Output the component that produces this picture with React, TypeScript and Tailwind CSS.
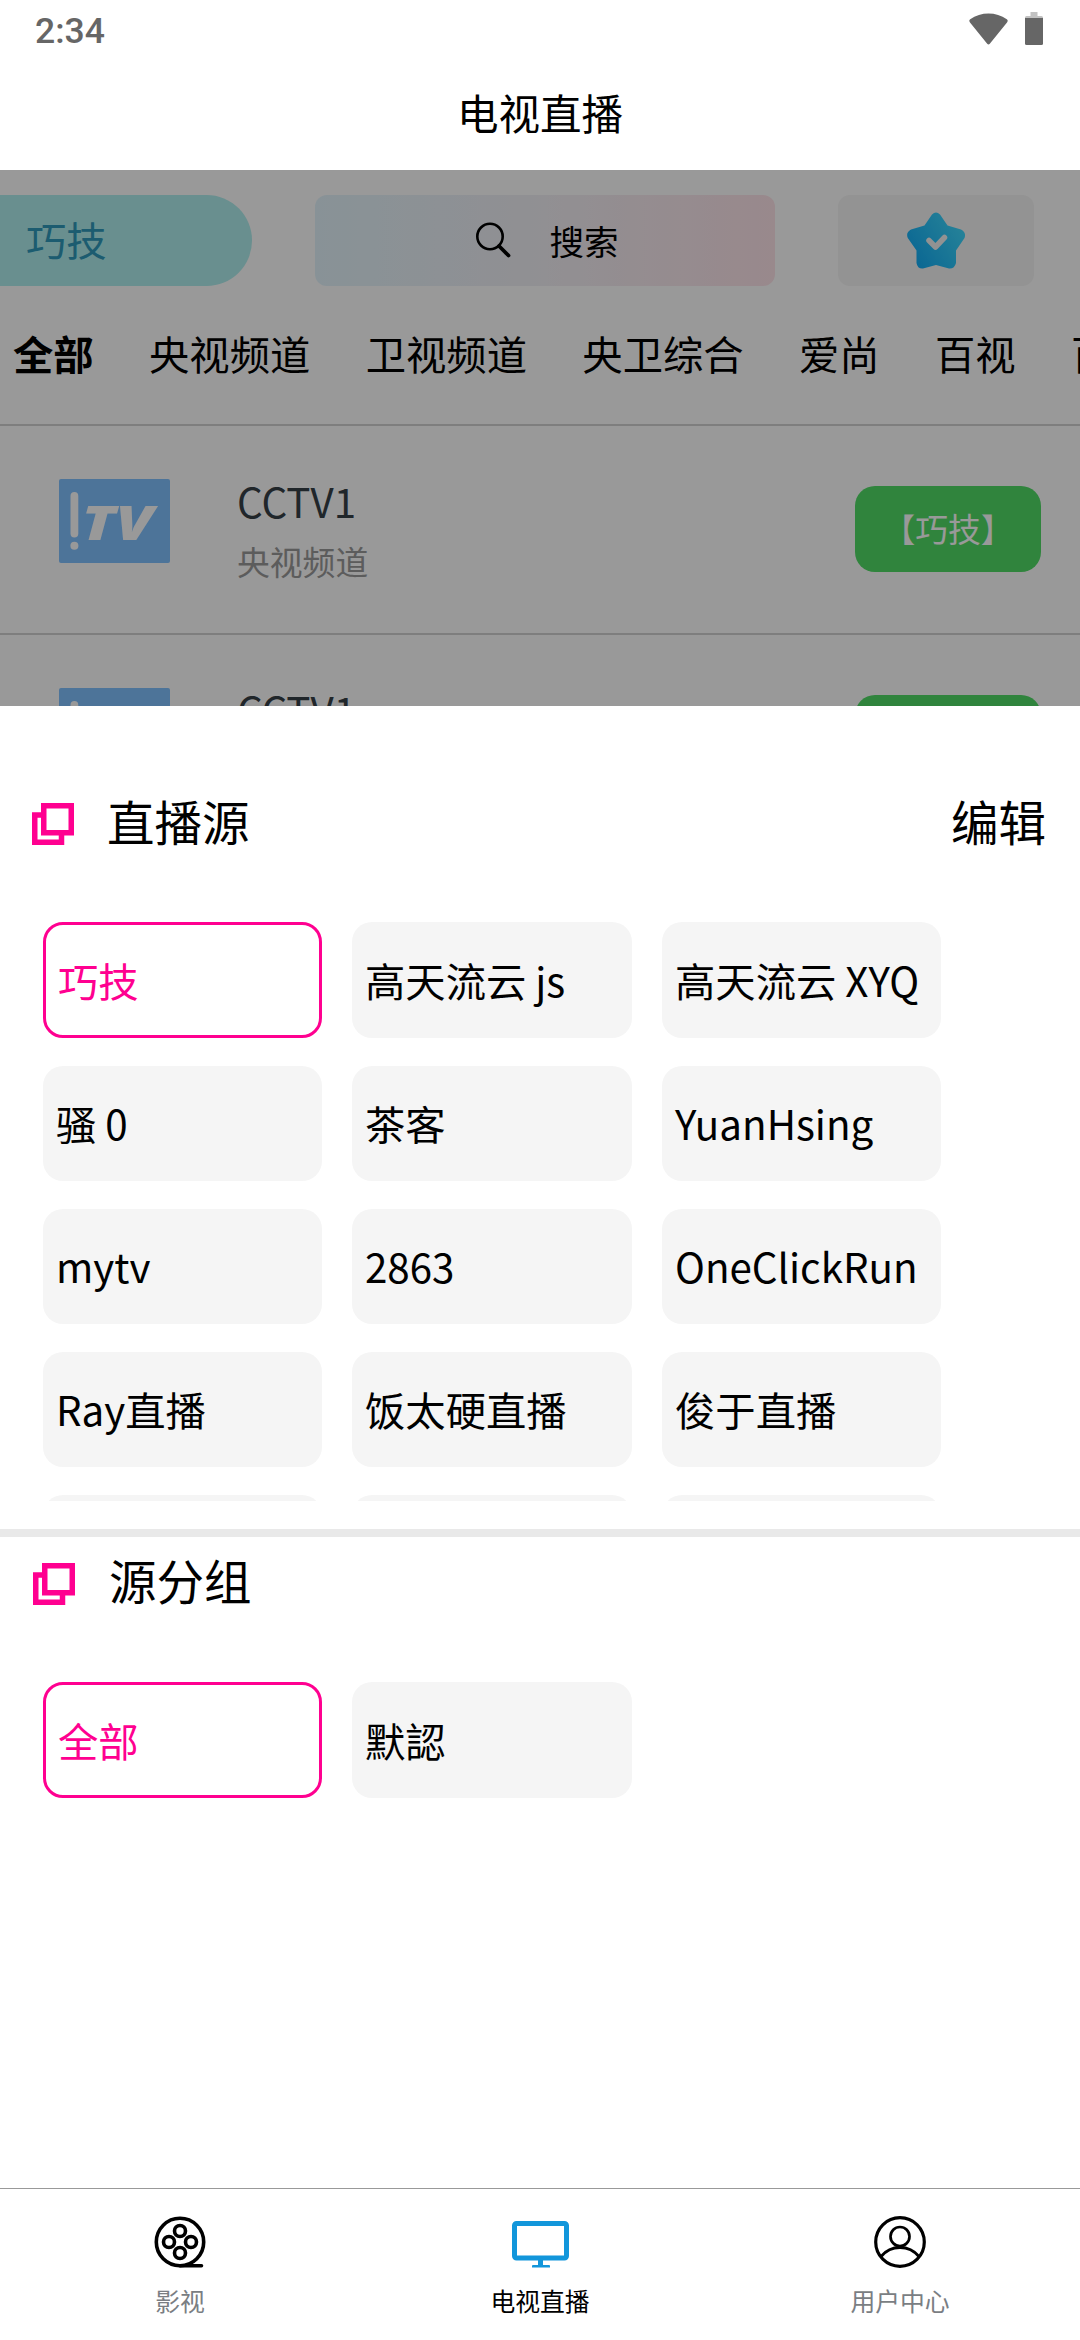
import type { ReactNode } from "react";

const tabs = ["全部", "央视频道", "卫视频道", "央卫综合", "爱尚", "百视", "百视"];

const sources = [
  "巧技", "高天流云 js", "高天流云 XYQ",
  "骚 0", "茶客", "YuanHsing",
  "mytv", "2863", "OneClickRun",
  "Ray直播", "饭太硬直播", "俊于直播",
  "", "", "",
];

const groups = ["全部", "默認"];

function StatusBar() {
  return (
    <div className="flex h-[60px] items-center justify-between pl-[35px] pr-[37px] text-[#666666]">
      <span className="pt-px font-['Roboto',sans-serif] text-[35.500px] font-medium leading-[60px]">2:34</span>
      <div className="flex items-center gap-[17px] pb-[3px]">
        <svg className="h-[32px] w-[39px]" viewBox="0 0 39 32" fill="currentColor">
          <path d="M1 9.5Q-.5 7.5 1.2 6.3C6.500 2.500 13 .5 19.500 .5S32.500 2.500 37.800 6.300Q39.500 7.500 38 9.500L20.800 30.800Q19.500 32 18.200 30.800Z" />
        </svg>
        <svg className="h-[33px] w-[18px]" viewBox="0 0 18 33">
          <path d="M5.500 0H12.500V4H16.500Q18 4 18 5.500V7H0V5.500Q0 4 1.500 4H5.500Z" fill="#c2c2c2" />
          <path d="M0 6H18V31.500Q18 33 16.500 33H1.500Q0 33 0 31.500Z" fill="currentColor" />
        </svg>
      </div>
    </div>
  );
}

function StarIcon() {
  return (
    <svg className="h-[57px] w-[58px]" viewBox="0 0 58 57">
      <defs>
        <linearGradient id="star" x1="0" y1="0.8" x2="1" y2="0.2">
          <stop offset="0" stopColor="#10aaf5" />
          <stop offset="1" stopColor="#42dcff" />
        </linearGradient>
      </defs>
      <path
        d="M25 2.500Q29 -1.500 33 2.500L40.500 13.500L54 17.500Q59.500 20.500 57.500 26L49 38.500V51Q47.500 57 42 56.500L29 53L16 56.500Q10.500 57 9.500 51V38.500L.8 26Q-1.500 20.500 4 17.500L17.500 13.500Z"
        fill="url(#star)"
      />
      <path d="M22 28.500L28.500 35L37.500 25.500" fill="none" stroke="#f4f4f4" strokeWidth="5.500" strokeLinecap="round" strokeLinejoin="round" />
    </svg>
  );
}

function TvLogo() {
  return (
    <div className="flex h-[84px] w-[111px] items-center rounded-[2px] bg-[#80c1ff]">
      <svg className="h-[84px] w-[111px]" viewBox="0 0 111 84" fill="#ffffff">
        <rect x="11.500" y="13" width="7.800" height="45.500" rx="3.900" />
        <circle cx="15.400" cy="66.800" r="4" />
        <text x="22.500" y="61" fontFamily="Open Sans" fontSize="48.500" fontWeight="800" fontStyle="italic" textLength="72" lengthAdjust="spacingAndGlyphs">TV</text>
      </svg>
    </div>
  );
}

function ChannelRow() {
  return (
    <div className="flex h-[209px] shrink-0 items-start border-b-2 border-[#d2d2d2] pl-[59px] pr-[39px]">
      <div className="pt-[53px]">
        <TvLogo />
      </div>
      <div className="flex flex-1 flex-col pl-[67px] pt-[45px]">
        <span className="text-[40.320px] leading-[60px] text-[#364046]">CCTV1</span>
        <span className="text-[32.800px] leading-[60px] text-[#9a9a9a]">央视频道</span>
      </div>
      <div className="mt-[60px] flex h-[86px] w-[186px] items-center justify-center rounded-[20px] bg-[#50dc66] pb-[3px] text-[32.800px] leading-[48px] text-white">
        <span>【巧技】</span>
      </div>
    </div>
  );
}

function CopyIcon() {
  return (
    <svg className="h-[42px] w-[42px] shrink-0" viewBox="0 0 42 42" fill="none" stroke="#ff0090" strokeWidth="5.500">
      <path d="M11.750 2.750H39.250V29.750H11.750Z" />
      <path d="M10 12H2.750V39.250H29.500V32" />
    </svg>
  );
}

function Chip({ label, selected }: { label: string; selected: boolean }) {
  return selected ? (
    <div className="flex h-[116px] items-center rounded-[20px] border-[3px] border-[#ff0090] bg-white pb-px pl-3 text-[#ff0090]">{label}</div>
  ) : (
    <div className="flex h-full items-center rounded-[20px] bg-[#f5f5f5] pb-px pl-[13px] text-black">{label}</div>
  );
}

function ChipGrid({ items }: { items: string[] }) {
  return (
    <div className="grid auto-rows-[minmax(115px,auto)] grid-cols-[279px_280px_279px] gap-x-[30px] gap-y-[28px] pl-[43px] text-[40.320px] leading-[58px] whitespace-nowrap">
      {items.map((label, i) => (
        <Chip key={i} label={label} selected={i === 0} />
      ))}
    </div>
  );
}

function NavItem({ label, active, children }: { label: string; active?: boolean; children: ReactNode }) {
  return (
    <div className="flex flex-1 flex-col items-center pt-[27px]">
      <div className="flex h-[52px] items-center">{children}</div>
      <span className={active ? "mt-[14px] text-[24.800px] leading-[36px] text-black" : "mt-[14px] text-[24.800px] leading-[36px] text-[#7a7e83]"}>
        {label}
      </span>
    </div>
  );
}

export default function App() {
  return (
    <div className="flex h-[2340px] w-[1080px] flex-col overflow-hidden bg-white font-['Noto_Sans_CJK_SC',sans-serif] text-black">
      <StatusBar />
      <header className="flex h-[110px] items-center justify-center pb-[7px] text-[41.500px] leading-[60px]">电视直播</header>

      <main className="relative flex h-[536px] flex-col overflow-hidden">
        <div className="flex shrink-0 items-center pt-[25px]">
          <div className="flex h-[91px] w-[252px] items-center rounded-r-full bg-[#afeeee] pb-[3px] pl-[26px] text-[40.320px] leading-[58px] text-[#3099bb]">巧技</div>
          <div className="ml-[63px] flex h-[91px] w-[460px] items-center justify-center gap-[38px] rounded-[12px] bg-linear-to-r from-[#e3f4fc] via-[#f2f0f5] to-[#ffe4ea] pb-px pl-[4px] text-[34.560px] leading-[50px]">
            <svg className="h-[36px] w-[36px]" viewBox="0 0 36 36" fill="none" stroke="#000000">
              <circle cx="15" cy="14.500" r="12.700" strokeWidth="2.600" />
              <path d="M24 24L33.500 33.500" strokeWidth="3.800" strokeLinecap="round" />
            </svg>
            <span>搜索</span>
          </div>
          <div className="ml-[63px] flex h-[91px] w-[196px] items-center justify-center rounded-[12px] bg-[#f5f5f5]">
            <StarIcon />
          </div>
        </div>

        <div className="flex h-[140px] shrink-0 items-center gap-[55.400px] border-b-2 border-[#d2d2d2] pb-[5px] pl-[13px] text-[40.320px] leading-[58px] whitespace-nowrap">
          {tabs.map((t, i) => (
            <span key={i} className={i === 0 ? "font-bold" : ""}>{t}</span>
          ))}
        </div>

        <ChannelRow />
        <ChannelRow />
        <div className="absolute inset-0 bg-black/40" />
      </main>

      <section className="flex h-[1482px] flex-col">
        <div className="flex h-[216px] items-center gap-[33px] pl-[32px] pr-[34px] pt-[20px] text-[47.500px] leading-[68px]">
          <CopyIcon />
          <span className="flex-1 pb-[6px]">直播源</span>
          <span className="pb-[6px]">编辑</span>
        </div>
        <div className="h-[579px] shrink-0 overflow-hidden">
          <ChipGrid items={sources} />
        </div>
        <div className="mt-[28px] h-[8px] shrink-0 bg-[#e9e9e9]" />
        <div className="flex h-[145px] shrink-0 items-start gap-[34px] pl-[33px] pt-[9px] text-[47.500px] leading-[68px]">
          <div className="flex h-[75px] items-center">
            <CopyIcon />
          </div>
          <span>源分组</span>
        </div>
        <ChipGrid items={groups} />
      </section>

      <nav className="flex h-[152px] shrink-0 border-t border-[#999999]">
        <NavItem label="影视">
          <svg className="h-[52px] w-[52px]" viewBox="0 0 52 52" fill="none" stroke="#000000" strokeWidth="3.600" strokeLinecap="round">
            <circle cx="26" cy="26" r="23.700" />
            <circle cx="26" cy="15" r="5.500" />
            <circle cx="26" cy="37" r="5.500" />
            <circle cx="15" cy="26" r="5.500" />
            <circle cx="37" cy="26" r="5.500" />
            <path d="M26 49.800H47.500" />
          </svg>
        </NavItem>
        <NavItem label="电视直播" active>
          <svg className="h-[52px] w-[57px]" viewBox="0 0 57 52">
            <rect x="2.500" y="7.500" width="52" height="34.500" rx="2" fill="none" stroke="#1296db" strokeWidth="5" />
            <path d="M26 43H31V49H37Q38 49 38 50V51.500H20V50Q20 49 21 49H26Z" fill="#1296db" />
          </svg>
        </NavItem>
        <NavItem label="用户中心">
          <svg className="h-[52px] w-[52px]" viewBox="0 0 52 52" fill="none" stroke="#000000">
            <circle cx="26" cy="26" r="24.300" strokeWidth="3.200" />
            <circle cx="26" cy="20.500" r="9.500" strokeWidth="2.700" />
            <path d="M7 40.500C12 34.500 18.500 31.500 26 31.500S40 34.500 45 40.500" strokeWidth="3" />
          </svg>
        </NavItem>
      </nav>
    </div>
  );
}
